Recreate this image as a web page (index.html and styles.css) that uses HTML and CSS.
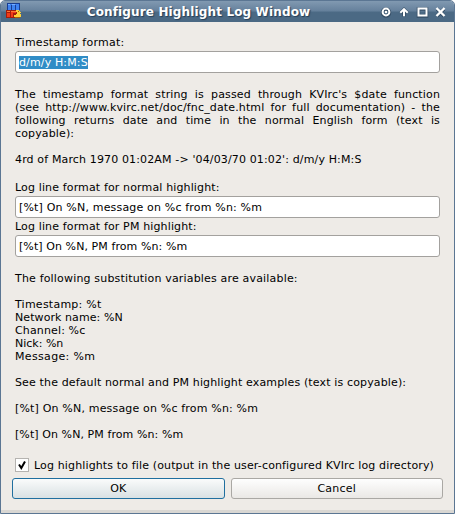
FILE: index.html
```html
<!DOCTYPE html>
<html lang="en">
<head>
<meta charset="utf-8">
<title>Configure Highlight Log Window</title>
<link rel="stylesheet" href="styles.css">
</head>
<body>
<main class="window">
  <header class="titlebar">
    <svg class="app-icon" width="16" height="16" viewBox="0 0 16 16" shape-rendering="crispEdges">
      <path fill="#173d92" d="M1 0h13v7H1z"/>
      <path fill="#3f83f0" d="M2 1h11v1H2zM2 2h3v5H2zM6 2h3v5H6zM10 2h3v5h-3z"/>
      <path fill="#79aefa" d="M2 1h2v1H2zM6 1h3v1H6z"/>
      <path fill="#a51c0b" d="M0 7h11v8H0z"/>
      <path fill="#f23a18" d="M1 8h3v1H1zM1 10h3v4H1zM5 8h5v2H5zM5 10h2v4H5zM9 12h1v2H9z"/>
      <path fill="#ff7a36" d="M1 8h3v1H1zM5 8h5v1H5z"/>
      <path fill="#ffcf38" d="M10 7h3v1h1v1h1v1h-1v1h1v3h-1v1H9v-1H8v-2h2v-1h1V9h-1z"/>
      <path fill="#a85f0c" d="M12 8h1v1h-1zM9 14h5v1H9z"/>
    </svg>
    <h1 class="title">Configure Highlight Log Window</h1>
    <svg class="controls" width="67" height="15" viewBox="0 0 67 15">
      <g class="shade" transform="translate(0 .5)">
        <circle cx="5" cy="7" r="3.500"/><path d="M23 11V4M19.500 7.500 23 4l3.500 3.500M37.500 3.500h8v7h-8zM56 3.500l7 7M63 3.500l-7 7"/>
      </g>
      <g class="glyphs">
        <circle cx="5" cy="7" r="3.400"/><circle class="dot" cx="5" cy="7" r="1.300"/>
        <path d="M23 11.200V5M19.300 7.800 23 4.100l3.700 3.700"/>
        <path class="box" d="M37.500 3.500h8v7h-8z"/>
        <path class="cross" d="M55.500 3l8 8M63.500 3l-8 8"/>
      </g>
    </svg>
  </header>
  <section class="content">
    <div class="label wider">Timestamp format:</div>
    <div class="field"><span class="selected">d/m/y H:M:S</span></div>
    <div class="help">
      <div class="justified">The timestamp format string is passed through KVIrc's $date function</div>
      <div class="justified">(see http://www.kvirc.net/doc/fnc_date.html for full documentation) - the</div>
      <div class="justified">following returns date and time in the normal English form (text is</div>
      <div>copyable):</div>
      <br>
      <div>4rd of March 1970 01:02AM -&gt; '04/03/70 01:02': d/m/y H:M:S</div>
    </div>
    <div class="label">Log line format for normal highlight:</div>
    <div class="field wide">[%t] On %N, message on %c from %n: %m</div>
    <div class="label second">Log line format for PM highlight:</div>
    <div class="field narrow">[%t] On %N, PM from %n: %m</div>
    <div class="variables">
      <div class="wide">The following substitution variables are available:</div>
      <br>
      <div class="wider">Timestamp: %t</div>
      <div class="narrow">Network name: %N</div>
      <div>Channel: %c</div>
      <div class="plain">Nick: %n</div>
      <div class="widest">Message: %m</div>
      <br>
      <div>See the default normal and PM highlight examples (text is copyable):</div>
      <br>
      <div class="wide">[%t] On %N, message on %c from %n: %m</div>
      <br>
      <div class="narrow">[%t] On %N, PM from %n: %m</div>
    </div>
    <div class="check-row">
      <span class="checkbox"><svg width="12" height="12" viewBox="0 0 12 12"><path d="M3 5.500l2.300 3.500L9 2.500"/></svg></span>
      <span>Log highlights to file (output in the user-configured KVIrc log directory)</span>
    </div>
  </section>
  <div class="buttons">
    <button class="button primary">OK</button>
    <button class="button wider">Cancel</button>
  </div>
</main>
</body>
</html>
```
FILE: styles.css
```css
* { box-sizing: border-box; }
body {
  margin: 0;
  background: #fff;
  color: #000;
  font: 11px/13px "DejaVu Sans", sans-serif;
  letter-spacing: .14px;
  white-space: nowrap;
}
.plain { letter-spacing: 0; }
.narrow { letter-spacing: .08px; }
.wide { letter-spacing: .175px; }
.wider { letter-spacing: .24px; }
.widest { letter-spacing: .34px; }
.window {
  width: 455px;
  height: 514px;
  border: 1px solid #5b7693;
  border-radius: 5px 5px 0 0;
  background: #eeebe7;
  box-shadow: inset 0 -3px #d9d7d3;
  overflow: hidden;
}
.titlebar {
  display: flex;
  height: 21px;
  padding: 2px 6px 0 5px;
  background: linear-gradient(#8199b1, #67829d 45%, #4b6984 55%, #4b6984);
}
.app-icon { flex: none; }
.title {
  flex: 1;
  margin: 2px 0 0;
  padding-right: 6px;
  color: #fff;
  font-size: 12px;
  line-height: 15px;
  text-align: center;
  text-shadow: 1px 1px 1px #263f57;
}
.controls { flex: none; margin-top: 2px; fill: none; }
.glyphs { stroke: #fff; stroke-width: 2; }
.shade { stroke: #344e66; stroke-width: 3.5; }
.dot { fill: #fff; stroke: none; }
.cross { stroke-width: 2.4; }
.content { padding: 14px 14px 0; }
.field {
  height: 22px;
  margin-top: 2px;
  padding: 4px 3px;
  border: 1px solid #a3a19e;
  border-radius: 3px;
  background: #fff;
}
.selected { display: inline-block; background: #308cc6; color: #fff; }
.help { margin: 15px 0; }
.justified { white-space: normal; text-align: justify; text-align-last: justify; }
.second { margin-top: 2px; }
.variables { margin-top: 15px; }
.check-row { display: flex; gap: 5px; margin-top: 17px; line-height: 15px; }
.checkbox {
  width: 14px;
  height: 14px;
  border: 1px solid #b5b3b0;
  background: #fff;
}
.checkbox svg { display: block; fill: none; stroke: #000; stroke-width: 2; }
.buttons { display: flex; gap: 6px; padding: 5px 11px 0; }
.button {
  flex: 1;
  height: 21px;
  padding: 0;
  border: 1px solid #aaa8a4;
  border-radius: 3px;
  background: linear-gradient(#fefefe, #eae8e5);
  color: #000;
  font: inherit;
}
.primary { border-color: #206f9f; background: linear-gradient(#fafbfb, #d9e1e3); }
```
